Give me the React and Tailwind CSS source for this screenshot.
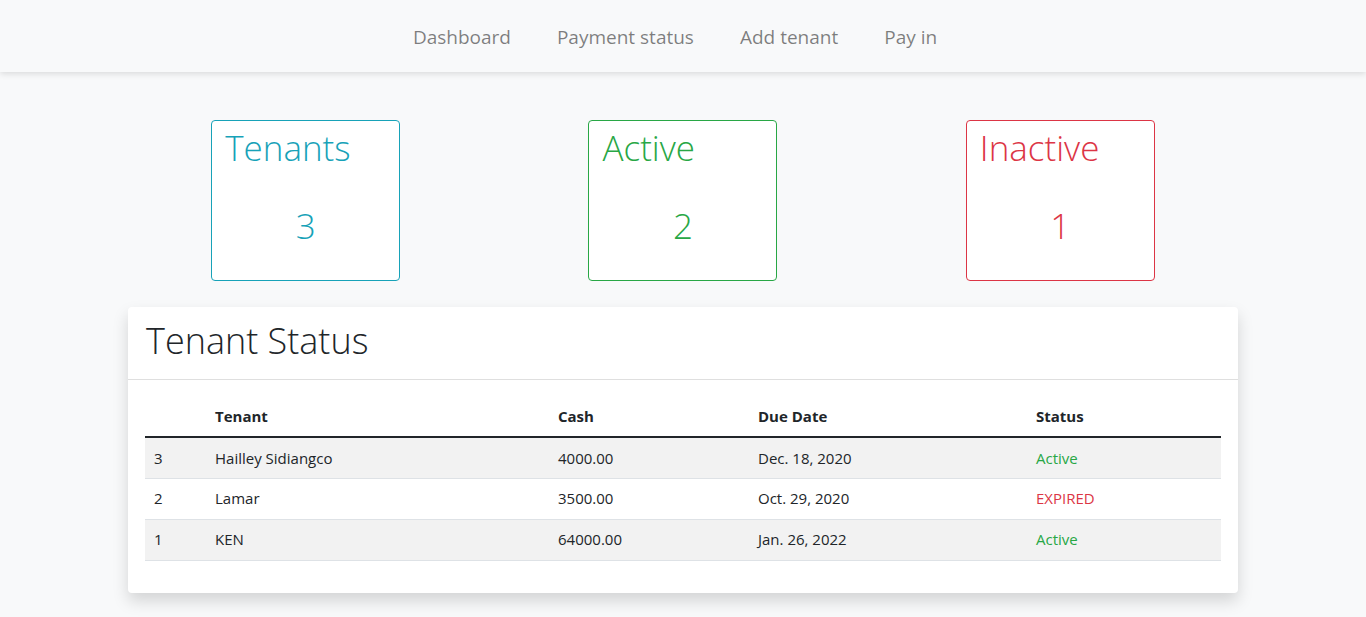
const stats = [
  { label: "Tenants", value: 3, tone: "text-[#17a2b8] border-[#17a2b8]" },
  { label: "Active", value: 2, tone: "text-[#28a745] border-[#28a745]" },
  { label: "Inactive", value: 1, tone: "text-[#dc3545] border-[#dc3545]" },
];

const tenants = [
  { id: 3, name: "Hailley Sidiangco", cash: "4000.00", due: "Dec. 18, 2020", status: "Active" },
  { id: 2, name: "Lamar", cash: "3500.00", due: "Oct. 29, 2020", status: "EXPIRED" },
  { id: 1, name: "KEN", cash: "64000.00", due: "Jan. 26, 2022", status: "Active" },
];

function App() {
  return (
    <div className="min-h-screen w-full bg-[#f8f9fa] font-['Open_Sans',sans-serif] text-[#212529]">
      {/* navbar */}
      <nav className="h-[72px] pt-[2px] pr-[16px] bg-[#f8f9fa] shadow-[0_2px_6px_rgba(0,0,0,0.12)] flex items-center justify-center gap-[46px] text-[19px] text-black/50">
        <a href="#">Dashboard</a>
        <a href="#">Payment status</a>
        <a href="#">Add tenant</a>
        <a href="#">Pay in</a>
      </nav>

      <main className="w-[1140px] mx-auto px-[15px]">
        {/* stat cards */}
        <div className="grid grid-cols-3 mt-12 -mx-[11px]">
          {stats.map((s) => (
            <div key={s.label} className="flex justify-center">
              <div className={`w-[189px] h-[161px] bg-white border rounded-[4px] flex flex-col px-[13px] ${s.tone}`}>
                <div className="text-[35px] font-light leading-[48px] mt-[3px]">{s.label}</div>
                <div className="text-[35px] font-light leading-[48px] text-center mt-[30px]">{s.value}</div>
              </div>
            </div>
          ))}
        </div>

        {/* tenant status */}
        <section className="mt-[26px] bg-white rounded-[4px] shadow-[0_0.5rem_1rem_rgba(0,0,0,0.15)]">
          <div className="h-[73px] flex items-center pb-[4px] px-[18px] border-b border-black/[0.125]">
            <h2 className="text-[36px] font-light">Tenant Status</h2>
          </div>
          <div className="px-[17px] pt-4 pb-8">
            <table className="w-full text-[15px] border-collapse">
              <thead>
                <tr className="h-[41px] border-b-2 border-[#212529] text-left">
                  <th className="w-[61px]"></th>
                  <th className="w-[343px] px-[9px] font-bold">Tenant</th>
                  <th className="w-[200px] px-[9px] font-bold">Cash</th>
                  <th className="w-[278px] px-[9px] font-bold">Due Date</th>
                  <th className="px-[9px] font-bold">Status</th>
                </tr>
              </thead>
              <tbody>
                {tenants.map((t, i) => (
                  <tr key={t.id} className={`h-[41px] border-b border-[#dee2e6] ${i % 2 === 0 ? "bg-[#f2f2f2]" : ""}`}>
                    <td className="px-[9px]">{t.id}</td>
                    <td className="px-[9px]">{t.name}</td>
                    <td className="px-[9px]">{t.cash}</td>
                    <td className="px-[9px]">{t.due}</td>
                    <td className={`px-[9px] ${t.status === "Active" ? "text-[#28a745]" : "text-[#dc3545]"}`}>{t.status}</td>
                  </tr>
                ))}
              </tbody>
            </table>
          </div>
        </section>
      </main>
    </div>
  );
}

export default App;
